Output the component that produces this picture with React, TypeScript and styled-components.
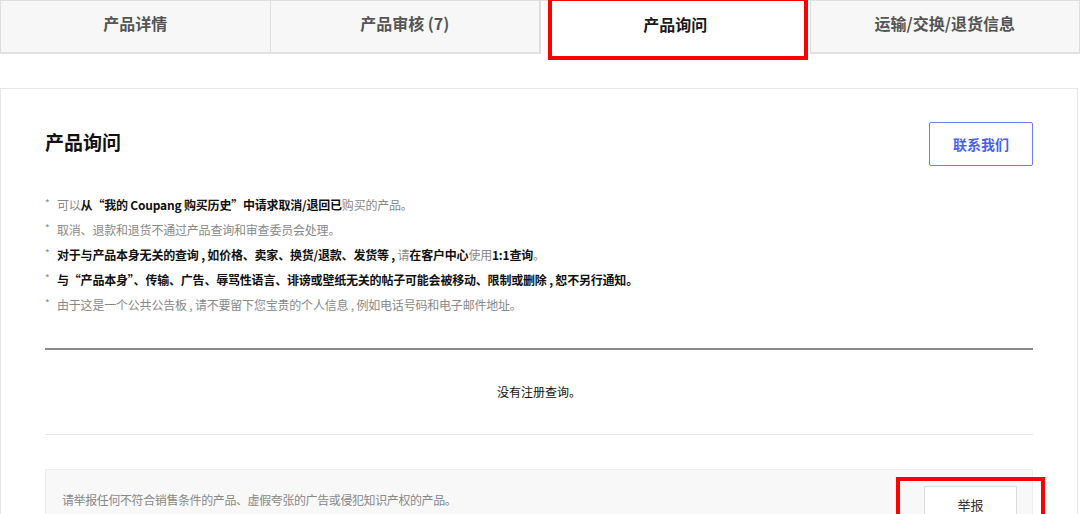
import styled, { createGlobalStyle } from "styled-components";

const GlobalStyle = createGlobalStyle`
	body {
		margin: 0;
		background: #fff;
		font-family: "Noto Sans CJK SC", "Noto Sans", "Liberation Sans", sans-serif;
		color: #222;
	}
	* {
		box-sizing: border-box;
	}
`;

const Page = styled.div`
	width: 1080px;
	height: 514px;
	overflow: hidden;
`;

const Tabs = styled.div`
	display: flex;
	height: 54px;
`;

const Tab = styled.div<{ $active?: boolean }>`
	flex: 1;
	position: relative;
	display: flex;
	align-items: center;
	justify-content: center;
	font-size: 16px;
	font-weight: 700;
	color: ${(p) => (p.$active ? "#1a1a1a" : "#555")};
	background: ${(p) => (p.$active ? "#fff" : "#f7f7f7")};
	border: 1px solid #dedede;
	border-bottom: ${(p) => (p.$active ? "none" : "2px solid #e2e2e2")};
	border-left: ${(p) => (p.$active ? "1px solid #dedede" : "none")};
	padding-bottom: 8px;

	&:first-child {
		border-left: 1px solid #dedede;
	}

	${(p) =>
		p.$active &&
		`
		&::after {
			content: "";
			position: absolute;
			left: 7px;
			right: 2px;
			top: -4px;
			bottom: -6px;
			border: 4px solid #ff0000;
		}
	`}
`;

const Panel = styled.div`
	margin: 34px 2px 0 0;
	border: 1px solid #e6e6e6;
	padding: 33px 44px 0 44px;
`;

const HeaderRow = styled.div`
	display: flex;
	justify-content: space-between;
	align-items: center;
	height: 44px;
`;

const Title = styled.h2`
	margin: 0 0 5px;
	font-size: 19px;
	font-weight: 700;
	color: #111;
`;

const ContactButton = styled.button`
	width: 104px;
	height: 44px;
	background: #fff;
	border: 1px solid #6c7eff;
	border-radius: 2px;
	color: #4a5ff0;
	font-family: inherit;
	font-size: 14px;
	font-weight: 700;
`;

const Notes = styled.ul`
	list-style: none;
	margin: 26px 0 0;
	padding: 0;
	font-size: 12px;
	line-height: 25px;
	letter-spacing: -0.2px;
	color: #888;
`;

const Note = styled.li`
	display: flex;

	&::before {
		content: "*";
		width: 12px;
		flex: none;
		color: #888;
		font-size: 10px;
		line-height: 22px;
	}
`;

const Strong = styled.b`
	font-weight: 700;
	color: #111;
`;

const Divider = styled.div`
	margin-top: 31px;
	height: 2px;
	background: #8a8a8a;
`;

const Empty = styled.div`
	height: 85px;
	display: flex;
	align-items: center;
	justify-content: center;
	font-size: 12px;
	color: #111;
	border-bottom: 1px solid #e6e6e6;
	padding-bottom: 2px;
`;

const ReportBox = styled.div`
	margin-top: 34px;
	display: flex;
	justify-content: space-between;
	align-items: flex-start;
	padding: 16px 15px 16px 16px;
	background: #f8f8f8;
	border: 1px solid #eeeeee;
`;

const ReportText = styled.span`
	margin-top: 6px;
	font-size: 12px;
	line-height: 16px;
	letter-spacing: -0.4px;
	color: #888;
`;

const ReportButton = styled.button`
	position: relative;
	width: 93px;
	height: 36px;
	background: #fff;
	border: 1px solid #dcdcdc;
	font-family: inherit;
	font-size: 13px;
	color: #333;

	&::after {
		content: "";
		position: absolute;
		left: -29px;
		right: -29px;
		top: -10px;
		bottom: -30px;
		border: 4px solid #ff0000;
	}
`;

const tabs = ["产品详情", "产品审核 (7)", "产品询问", "运输/交换/退货信息"];

const App = () => {
	return (
		<Page>
			<GlobalStyle />
			<Tabs>
				{tabs.map((t, i) => (
					<Tab key={t} $active={i === 2}>
						{t}
					</Tab>
				))}
			</Tabs>
			<Panel>
				<HeaderRow>
					<Title>产品询问</Title>
					<ContactButton>联系我们</ContactButton>
				</HeaderRow>
				<Notes>
					<Note>
						<span>
							可以<Strong>从“我的 Coupang 购买历史”中请求取消/退回已</Strong>购买的产品。
						</span>
					</Note>
					<Note>
						<span>取消、退款和退货不通过产品查询和审查委员会处理。</span>
					</Note>
					<Note>
						<span>
							<Strong>对于与产品本身无关的查询 , 如价格、卖家、换货/退款、发货等 , </Strong>请
							<Strong>在客户中心</Strong>使用<Strong>1:1查询</Strong>。
						</span>
					</Note>
					<Note>
						<span>
							<Strong>
								与“产品本身”、传输、广告、辱骂性语言、诽谤或壁纸无关的帖子可能会被移动、限制或删除 , 恕不另行通知。
							</Strong>
						</span>
					</Note>
					<Note>
						<span>由于这是一个公共公告板 , 请不要留下您宝贵的个人信息 , 例如电话号码和电子邮件地址。</span>
					</Note>
				</Notes>
				<Divider />
				<Empty>没有注册查询。</Empty>
				<ReportBox>
					<ReportText>请举报任何不符合销售条件的产品、虚假夸张的广告或侵犯知识产权的产品。</ReportText>
					<ReportButton>举报</ReportButton>
				</ReportBox>
			</Panel>
		</Page>
	);
};

export default App;
